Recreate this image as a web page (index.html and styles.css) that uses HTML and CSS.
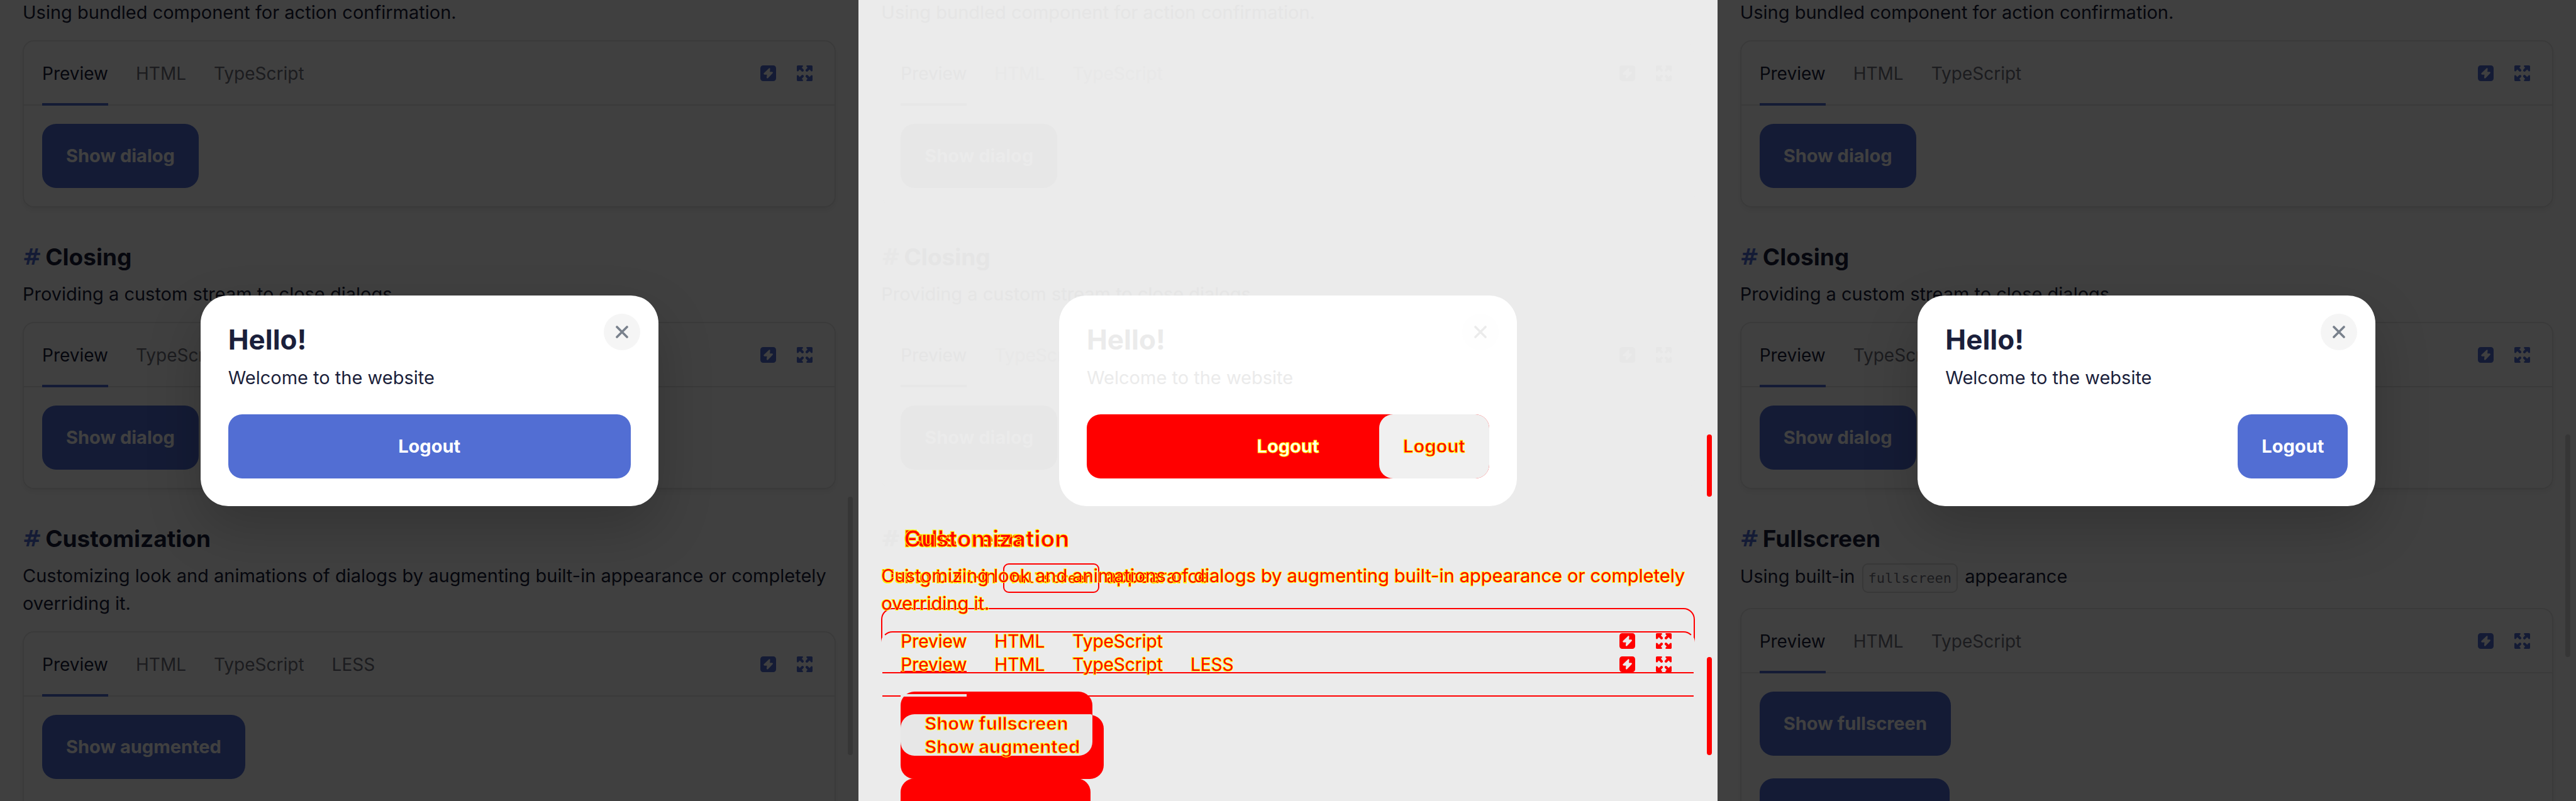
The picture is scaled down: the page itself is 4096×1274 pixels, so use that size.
FILE: index.html
```html
<!DOCTYPE html>
<html lang="en">
<head>
<meta charset="utf-8">
<title>Dialog documentation: snapshot comparison</title>
<link rel="stylesheet" href="styles.css">
</head>
<body>
<svg class="sprite" aria-hidden="true">
  <symbol id="bolt" viewBox="0 0 28 28"><path fill-rule="evenodd" d="M5 0h18a5 5 0 0 1 5 5v18a5 5 0 0 1-5 5H5a5 5 0 0 1-5-5V5a5 5 0 0 1 5-5zM15.200 5.300 6.400 13.800c-1 1-.4 2.600 1 2.600h4.400l-.6 5c-.1 1.900 1.400 2.200 2.400 1.200l8.200-8.600c1-1 .5-2.600-1-2.600h-3.900l.5-5c.1-1.700-1.200-2.200-2.200-1.100z"/></symbol>
  <symbol id="expand" viewBox="0 0 28 28"><g id="arrow"><path d="M2 0h7.500c1.800 0 2 1.600.9 2.600L8.800 4.200l3 3c1 1 .8 2.200 0 3.200-.9 1-2.200 1-3.200.2l-3.400-3.200-2.300 2.600C1.800 11.200 0 10.800 0 9V2C0 .8.800 0 2 0z"/></g><use href="#arrow" transform="matrix(-1 0 0 1 28 0)"/><use href="#arrow" transform="matrix(1 0 0 -1 0 28)"/><use href="#arrow" transform="matrix(-1 0 0 -1 28 28)"/></symbol>
  <symbol id="cross" viewBox="0 0 20 20"><path d="M2 2l16 16M18 2L2 18" fill="none" stroke="currentColor" stroke-width="3.600" stroke-linecap="round"/></symbol>
</svg>
<main class="board">

  <div class="frame">
    <div class="page">
      <section class="example">
        <p class="text">Using bundled component for action confirmation.</p>
        <div class="card">
          <header class="bar"><div class="tabs" role="tablist"><button class="tab active" role="tab">Preview</button><button class="tab" role="tab">HTML</button><button class="tab" role="tab">TypeScript</button></div><div class="tools"><button class="tool" aria-label="Edit online"><svg><use href="#bolt"/></svg></button><button class="tool" aria-label="Expand"><svg><use href="#expand"/></svg></button></div></header>
          <div class="content"><button class="button">Show dialog</button></div>
        </div>
      </section>
      <section class="example">
        <h2 class="heading"><a class="hash" href="#closing">#</a>Closing</h2>
        <p class="text">Providing a custom stream to close dialogs.</p>
        <div class="card">
          <header class="bar"><div class="tabs" role="tablist"><button class="tab active" role="tab">Preview</button><button class="tab" role="tab">TypeScript</button></div><div class="tools"><button class="tool" aria-label="Edit online"><svg><use href="#bolt"/></svg></button><button class="tool" aria-label="Expand"><svg><use href="#expand"/></svg></button></div></header>
          <div class="content"><button class="button">Show dialog</button></div>
        </div>
      </section>
      <section class="example">
        <h2 class="heading"><a class="hash" href="#customization">#</a>Customization</h2>
        <p class="text">Customizing look and animations of dialogs by augmenting built-in appearance or completely overriding it.</p>
        <div class="card">
          <header class="bar"><div class="tabs" role="tablist"><button class="tab active" role="tab">Preview</button><button class="tab" role="tab">HTML</button><button class="tab" role="tab">TypeScript</button><button class="tab" role="tab">LESS</button></div><div class="tools"><button class="tool" aria-label="Edit online"><svg><use href="#bolt"/></svg></button><button class="tool" aria-label="Expand"><svg><use href="#expand"/></svg></button></div></header>
          <div class="content"><button class="button">Show augmented</button><button class="button next" aria-label="More"></button></div>
        </div>
      </section>
    </div>
    <div class="backdrop">
      <section class="dialog" role="dialog" aria-label="Hello!">
        <button class="close" aria-label="Close"><svg><use href="#cross"/></svg></button>
        <h1 class="title">Hello!</h1>
        <p class="text">Welcome to the website</p>
        <div class="actions"><button class="button wide">Logout</button></div>
      </section>
    </div>
    <div class="thumb thumb-low"></div>
  </div>

  <div class="frame diff">
    <div class="page">
      <section class="example">
        <p class="text">Using bundled component for action confirmation.</p>
        <div class="card">
          <header class="bar"><div class="tabs" role="tablist"><button class="tab active" role="tab">Preview</button><button class="tab" role="tab">HTML</button><button class="tab" role="tab">TypeScript</button></div><div class="tools"><button class="tool" aria-label="Edit online"><svg><use href="#bolt"/></svg></button><button class="tool" aria-label="Expand"><svg><use href="#expand"/></svg></button></div></header>
          <div class="content"><button class="button">Show dialog</button></div>
        </div>
      </section>
      <section class="example">
        <h2 class="heading"><a class="hash" href="#closing">#</a>Closing</h2>
        <p class="text">Providing a custom stream to close dialogs.</p>
        <div class="card">
          <header class="bar"><div class="tabs" role="tablist"><button class="tab active" role="tab">Preview</button><button class="tab" role="tab">TypeScript</button></div><div class="tools"><button class="tool" aria-label="Edit online"><svg><use href="#bolt"/></svg></button><button class="tool" aria-label="Expand"><svg><use href="#expand"/></svg></button></div></header>
          <div class="content"><button class="button">Show dialog</button></div>
        </div>
      </section>
      <div class="stack">
        <section class="example changed">
          <h2 class="heading"><a class="hash" href="#fullscreen">#</a>Fullscreen</h2>
          <p class="text">Using built-in <code class="code">fullscreen</code> appearance</p>
          <div class="card">
            <header class="bar"><div class="tabs" role="tablist"><button class="tab active" role="tab">Preview</button><button class="tab" role="tab">HTML</button><button class="tab" role="tab">TypeScript</button></div><div class="tools"><button class="tool" aria-label="Edit online"><svg><use href="#bolt"/></svg></button><button class="tool" aria-label="Expand"><svg><use href="#expand"/></svg></button></div></header>
            <div class="content"><button class="button overlapped"><span class="label">Show fullscreen</span></button><button class="button next" aria-label="More"></button></div>
          </div>
        </section>
        <section class="example changed upper">
          <h2 class="heading"><a class="hash" href="#customization">#</a>Customization</h2>
          <p class="text">Customizing look and animations of dialogs by augmenting built-in appearance or completely overriding it.</p>
          <div class="card">
            <header class="bar"><div class="tabs" role="tablist"><button class="tab active" role="tab">Preview</button><button class="tab" role="tab">HTML</button><button class="tab" role="tab">TypeScript</button><button class="tab" role="tab">LESS</button></div><div class="tools"><button class="tool" aria-label="Edit online"><svg><use href="#bolt"/></svg></button><button class="tool" aria-label="Expand"><svg><use href="#expand"/></svg></button></div></header>
            <div class="content"><button class="button"><span class="label">Show augmented</span></button><button class="button next" aria-label="More"></button></div>
          </div>
        </section>
      </div>
    </div>
    <div class="backdrop">
      <section class="dialog" role="dialog" aria-label="Hello!">
        <button class="close" aria-label="Close"><svg><use href="#cross"/></svg></button>
        <h1 class="title">Hello!</h1>
        <p class="text">Welcome to the website</p>
        <div class="actions"><button class="button wide">Logout</button><button class="button compact">Logout</button></div>
      </section>
    </div>
    <div class="thumb thumb-before"></div>
    <div class="thumb thumb-after"></div>
  </div>

  <div class="frame">
    <div class="page">
      <section class="example">
        <p class="text">Using bundled component for action confirmation.</p>
        <div class="card">
          <header class="bar"><div class="tabs" role="tablist"><button class="tab active" role="tab">Preview</button><button class="tab" role="tab">HTML</button><button class="tab" role="tab">TypeScript</button></div><div class="tools"><button class="tool" aria-label="Edit online"><svg><use href="#bolt"/></svg></button><button class="tool" aria-label="Expand"><svg><use href="#expand"/></svg></button></div></header>
          <div class="content"><button class="button">Show dialog</button></div>
        </div>
      </section>
      <section class="example">
        <h2 class="heading"><a class="hash" href="#closing">#</a>Closing</h2>
        <p class="text">Providing a custom stream to close dialogs.</p>
        <div class="card">
          <header class="bar"><div class="tabs" role="tablist"><button class="tab active" role="tab">Preview</button><button class="tab" role="tab">TypeScript</button></div><div class="tools"><button class="tool" aria-label="Edit online"><svg><use href="#bolt"/></svg></button><button class="tool" aria-label="Expand"><svg><use href="#expand"/></svg></button></div></header>
          <div class="content"><button class="button">Show dialog</button></div>
        </div>
      </section>
      <section class="example">
        <h2 class="heading"><a class="hash" href="#fullscreen">#</a>Fullscreen</h2>
        <p class="text">Using built-in <code class="code">fullscreen</code> appearance</p>
        <div class="card">
          <header class="bar"><div class="tabs" role="tablist"><button class="tab active" role="tab">Preview</button><button class="tab" role="tab">HTML</button><button class="tab" role="tab">TypeScript</button></div><div class="tools"><button class="tool" aria-label="Edit online"><svg><use href="#bolt"/></svg></button><button class="tool" aria-label="Expand"><svg><use href="#expand"/></svg></button></div></header>
          <div class="content"><button class="button">Show fullscreen</button><button class="button next" aria-label="More"></button></div>
        </div>
      </section>
    </div>
    <div class="backdrop">
      <section class="dialog" role="dialog" aria-label="Hello!">
        <button class="close" aria-label="Close"><svg><use href="#cross"/></svg></button>
        <h1 class="title">Hello!</h1>
        <p class="text">Welcome to the website</p>
        <div class="actions"><button class="button compact">Logout</button></div>
      </section>
    </div>
    <div class="thumb thumb-high"></div>
  </div>

</main>
</body>
</html>
```

FILE: styles.css
```css
* { box-sizing: border-box; }

body {
  margin: 0;
  font: 400 29px/44px Inter, "Open Sans", sans-serif;
  color: #1b1f3b;
}

h1, h2, p { margin: 0; }

button {
  margin: 0;
  padding: 0;
  border: 0;
  background: none;
  color: inherit;
  font: inherit;
}

.sprite { position: absolute; width: 0; height: 0; }

.board { display: flex; height: 100vh; }

.frame {
  --accent: #526ed3;
  --line: #e8e8e8;
  --muted: #6f727c;
  position: relative;
  flex: 1 1 0;
  min-width: 0;
  overflow: hidden;
  background: #fff;
}

/* The page is scrolled: its first line touches the top edge */
.page { margin-top: -2px; padding: 0 36px; }

.example { padding-bottom: 57px; }

.heading {
  display: flex;
  gap: 6px;
  margin-bottom: 15px;
  font-size: 37px;
  line-height: 44px;
  font-weight: 700;
}

.hash {
  color: var(--accent);
  font-family: "DejaVu Sans", sans-serif;
  font-size: 36px;
  text-decoration: none;
}

.code {
  display: inline-block;
  margin: 2px 3px;
  padding: 1px 8px 0;
  border: 2px solid #dcdcdc;
  border-radius: 9px;
  color: var(--muted);
  font: 22px/42px "DejaVu Sans Mono", monospace;
}

.card {
  margin-top: 22px;
  border: 2px solid var(--line);
  border-radius: 18px;
  box-shadow: 0 5px 8px rgba(0, 0, 0, 0.06);
}

.bar {
  display: flex;
  justify-content: space-between;
  height: 102px;
  padding: 0 35px 0 29px;
  border-bottom: 2px solid var(--line);
}

.tabs { display: flex; gap: 44px; }

.tab { height: 102px; color: var(--muted); font-size: 28px; }

.tab.active { padding-top: 4px; border-bottom: 4px solid var(--accent); color: #1b1f3b; }

.tools { display: flex; align-items: center; gap: 33px; color: var(--accent); }

.tool { display: flex; }

.tool svg { width: 25px; height: 25px; fill: currentColor; }

.content {
  display: flex;
  flex-direction: column;
  align-items: flex-start;
  gap: 36px;
  padding: 29px;
}

.button {
  height: 102px;
  padding: 0 38px;
  border-radius: 22px;
  background: var(--accent);
  color: #fff;
  font-weight: 700;
}

.next { width: 302px; }

.backdrop {
  position: absolute;
  inset: 0;
  display: grid;
  place-items: center;
  background: rgba(0, 0, 0, 0.75);
}

.dialog {
  position: relative;
  width: 728px;
  padding: 44px;
  border-radius: 44px;
  background: #fff;
  box-shadow: 0 36px 88px rgba(0, 0, 0, 0.2);
}

.title { margin-bottom: 13px; font-size: 44px; line-height: 52px; font-weight: 700; }

.close {
  position: absolute;
  top: 29px;
  right: 29px;
  display: grid;
  place-items: center;
  width: 58px;
  height: 58px;
  border-radius: 50%;
  background: #f5f5f5;
  color: #79818c;
}

.close svg { width: 20px; height: 20px; }

.actions { display: grid; margin-top: 36px; }

.actions .button { grid-area: 1 / 1; }

.compact { justify-self: end; }

/* Scroll bar thumbs float over the page */
.thumb {
  position: absolute;
  right: 9px;
  width: 8px;
  border-radius: 4px;
  background: #363636;
}

.thumb-low { top: 62%; height: 32.3%; }
.thumb-high { top: 54.2%; height: 27.8%; }
.thumb-before { top: 54.2%; height: 7.8%; }
.thumb-after { top: 82%; height: 12.3%; }

/* Difference frame: equal pixels fade out, unequal ones turn red */
.diff {
  --accent: #e7e7e7;
  --line: #ebebeb;
  --muted: #e8e8e8;
  background: #ebebeb;
  color: #e5e5e5;
}

.diff .card { box-shadow: none; }
.diff .tab.active { color: #e5e5e5; }
.diff .button { color: #ebebeb; }
.diff .backdrop { background: none; }
.diff .dialog { box-shadow: none; color: #ebebeb; }
.diff .close { background: #fefefe; color: #ebebeb; }
.diff .thumb { background: #f00; }

.stack { display: grid; }

.changed { grid-area: 1 / 1; min-width: 0; --line: #f00; }

.changed .heading,
.changed .text,
.changed .code,
.changed .tab,
.diff .changed .tab.active,
.changed .label {
  color: #f00;
  -webkit-text-stroke: 2px #ff0;
  paint-order: stroke;
}

/* Bold text keeps a thinner red core */
.changed .heading,
.changed .label {
  -webkit-text-stroke-width: 1px;
  paint-order: normal;
}

.changed .hash { -webkit-text-stroke: 0; }
.changed .code { border-color: #f00; }
.changed .tools { color: #f00; }
.changed .button { background: #f00; }
.changed .tab.active { border-color: #f00; }

.upper .card { border-left-color: #ebebeb; border-right-color: #ebebeb; }
.upper .tab.active { position: relative; z-index: 2; border-color: #e7e7e7; }

.label { position: relative; z-index: 2; }

.overlapped { position: relative; }

/* Area that both buttons cover */
.overlapped::after {
  content: "";
  position: absolute;
  z-index: 1;
  inset: 36px 0 0;
  border-radius: 22px 3px 22px 22px;
  background: #e7e7e7;
}

.diff .actions .wide { background: #f00; color: #fff; -webkit-text-stroke: 1px #ff0; }
.diff .actions .compact { background: #f0f0f0; color: #f00; -webkit-text-stroke: 1px #ff0; }
```
